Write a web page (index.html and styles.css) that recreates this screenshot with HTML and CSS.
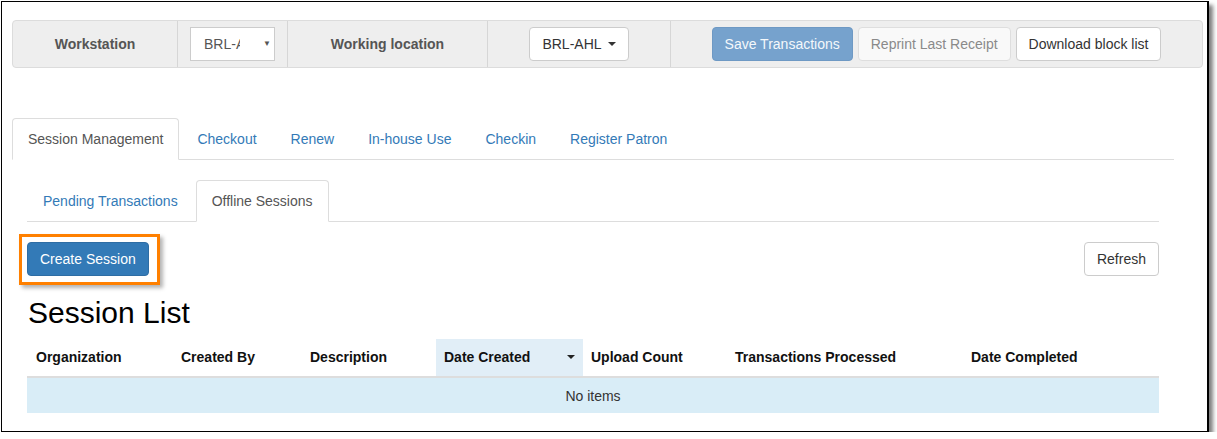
FILE: index.html
```
<!DOCTYPE html>
<html>
<head>
<meta charset="utf-8">
<link rel="stylesheet" href="styles.css">
</head>
<body>
<div class="frame">
  <div class="navbar">
    <div class="cell cell-ws"><span class="label">Workstation</span></div>
    <div class="cell cell-sel">
      <div class="select"><span class="sel-text">BRL-AHL</span><span class="sel-arrow">▼</span></div>
    </div>
    <div class="cell cell-wl"><span class="label">Working location</span></div>
    <div class="cell cell-dd">
      <button class="btn btn-default">BRL-AHL <span class="caret"></span></button>
    </div>
    <div class="cell cell-actions">
      <button class="btn btn-primary disabled">Save Transactions</button>
      <button class="btn btn-default disabled">Reprint Last Receipt</button>
      <button class="btn btn-default">Download block list</button>
    </div>
  </div>

  <div class="main">
    <ul class="tabs">
      <li class="tab active">Session Management</li>
      <li class="tab">Checkout</li>
      <li class="tab">Renew</li>
      <li class="tab">In-house Use</li>
      <li class="tab">Checkin</li>
      <li class="tab">Register Patron</li>
    </ul>
    <div class="tab-content">
      <ul class="tabs sub">
        <li class="tab">Pending Transactions</li>
        <li class="tab active">Offline Sessions</li>
      </ul>
      <div class="toolbar">
        <div class="highlight-wrap">
          <button class="btn btn-primary">Create Session</button>
          <div class="highlight"></div>
        </div>
        <button class="btn btn-default">Refresh</button>
      </div>
      <h2 class="title">Session List</h2>
      <table class="grid">
        <colgroup>
          <col class="c1"><col class="c2"><col class="c3"><col class="c4"><col class="c5"><col class="c6"><col class="c7">
        </colgroup>
        <thead>
          <tr>
            <th class="first">Organization</th>
            <th>Created By</th>
            <th>Description</th>
            <th class="sorted"><span>Date Created</span><span class="caret dark"></span></th>
            <th>Upload Count</th>
            <th>Transactions Processed</th>
            <th>Date Completed</th>
          </tr>
        </thead>
        <tbody>
          <tr class="empty"><td colspan="7">No items</td></tr>
        </tbody>
      </table>
    </div>
  </div>
</div>
</body>
</html>
```

FILE: styles.css
```
* { box-sizing: border-box; }
html, body { margin: 0; padding: 0; background: #fff; }
body {
  font-family: "Liberation Sans", Arial, Helvetica, sans-serif;
  font-size: 14px;
  line-height: 20px;
  color: #333;
  padding: 1px 0 0 1px;
}
.frame {
  width: 1208px;
  height: 431px;
  border: 1px solid #000;
  border-right-width: 2px;
  box-shadow: 4px 4px 4px rgba(0,0,0,0.5);
  padding: 18px 0 0 10px;
  overflow: hidden;
}
.navbar {
  width: 1191px;
  height: 48px;
  background: #eeeeee;
  border: 1px solid #dcdcdc;
  border-radius: 4px;
  display: flex;
}
.cell {
  display: flex;
  align-items: center;
  justify-content: center;
  border-right: 1px solid #d6d6d6;
}
.cell-ws { width: 165px; }
.cell-sel { width: 110px; }
.cell-wl { width: 200px; }
.cell-dd { width: 183px; }
.cell-actions { flex: 1; border-right: 0; gap: 5px; }
.label { font-weight: bold; color: #555; }
.select {
  width: 85px;
  height: 34px;
  background: #fff;
  border: 1px solid #ccc;
  display: flex;
  align-items: center;
  padding-left: 13px;
  color: #555;
}
.sel-text {
  display: inline-block;
  width: 36px;
  overflow: hidden;
  white-space: nowrap;
}
.sel-arrow {
  margin-left: 23px;
  font-size: 8px;
  color: #555;
}
.btn {
  font-family: inherit;
  font-size: 14px;
  line-height: 20px;
  height: 34px;
  padding: 6px 12px;
  border: 1px solid #ccc;
  border-radius: 4px;
  background: #fff;
  color: #333;
  white-space: nowrap;
  display: inline-flex;
  align-items: center;
}
.btn-primary {
  background: #337ab7;
  border-color: #2e6da4;
  color: #fff;
}
.btn-primary.disabled {
  background: #76a2cd;
  border-color: #6e99c4;
  color: #f4f8fb;
}
.btn-default.disabled {
  background: #f9f9f9;
  border-color: #dedede;
  color: #8a8a8a;
}
.caret {
  display: inline-block;
  width: 0;
  height: 0;
  margin-left: 6px;
  border-top: 4px solid #333;
  border-left: 4px solid transparent;
  border-right: 4px solid transparent;
}
.main {
  width: 1162px;
  margin-top: 50px;
}
.tabs {
  list-style: none;
  margin: 0;
  padding: 0;
  display: flex;
  border-bottom: 1px solid #ddd;
}
.tab {
  padding: 10px 15px;
  margin-right: 2px;
  margin-bottom: -1px;
  border: 1px solid transparent;
  border-radius: 4px 4px 0 0;
  color: #337ab7;
  line-height: 20px;
}
.tab.active {
  color: #555;
  background: #fff;
  border-color: #ddd;
  border-bottom-color: #fff;
}
.tab-content { padding: 0 15px; }
.tabs.sub { margin-top: 20px; }
.toolbar {
  margin-top: 20px;
  display: flex;
  justify-content: space-between;
  align-items: flex-start;
}
.highlight-wrap { position: relative; }
.highlight {
  position: absolute;
  left: -8px;
  top: -8px;
  width: 141px;
  height: 51px;
  border: 3px solid #ff8000;
  box-shadow: 3px 3px 4px rgba(0,0,0,0.3);
}
.title {
  margin: 20px 0 10px 1px;
  font-size: 30px;
  line-height: 33px;
  font-weight: normal;
  color: #000;
}
.grid {
  width: 1132px;
  table-layout: fixed;
  border-collapse: collapse;
}
.c1 { width: 146px; }
.c2 { width: 129px; }
.c3 { width: 134px; }
.c4 { width: 147px; }
.c5 { width: 144px; }
.c6 { width: 236px; }
.c7 { width: 196px; }
.grid th {
  text-align: left;
  padding: 8px 8px 9px 8px;
  font-weight: bold;
  color: #111;
  border-bottom: 2px solid #ddd;
  white-space: nowrap;
}
.grid th.first { padding-left: 9px; }
.grid th.sorted {
  background: #e1eef7;
  position: relative;
}
.grid th.sorted .caret {
  position: absolute;
  right: 8px;
  top: 16px;
}
.caret.dark { border-top-color: #222; }
.grid td {
  padding: 8px 8px 7px;
  text-align: center;
  color: #333;
}
.empty td { background: #d9edf7; }
```
